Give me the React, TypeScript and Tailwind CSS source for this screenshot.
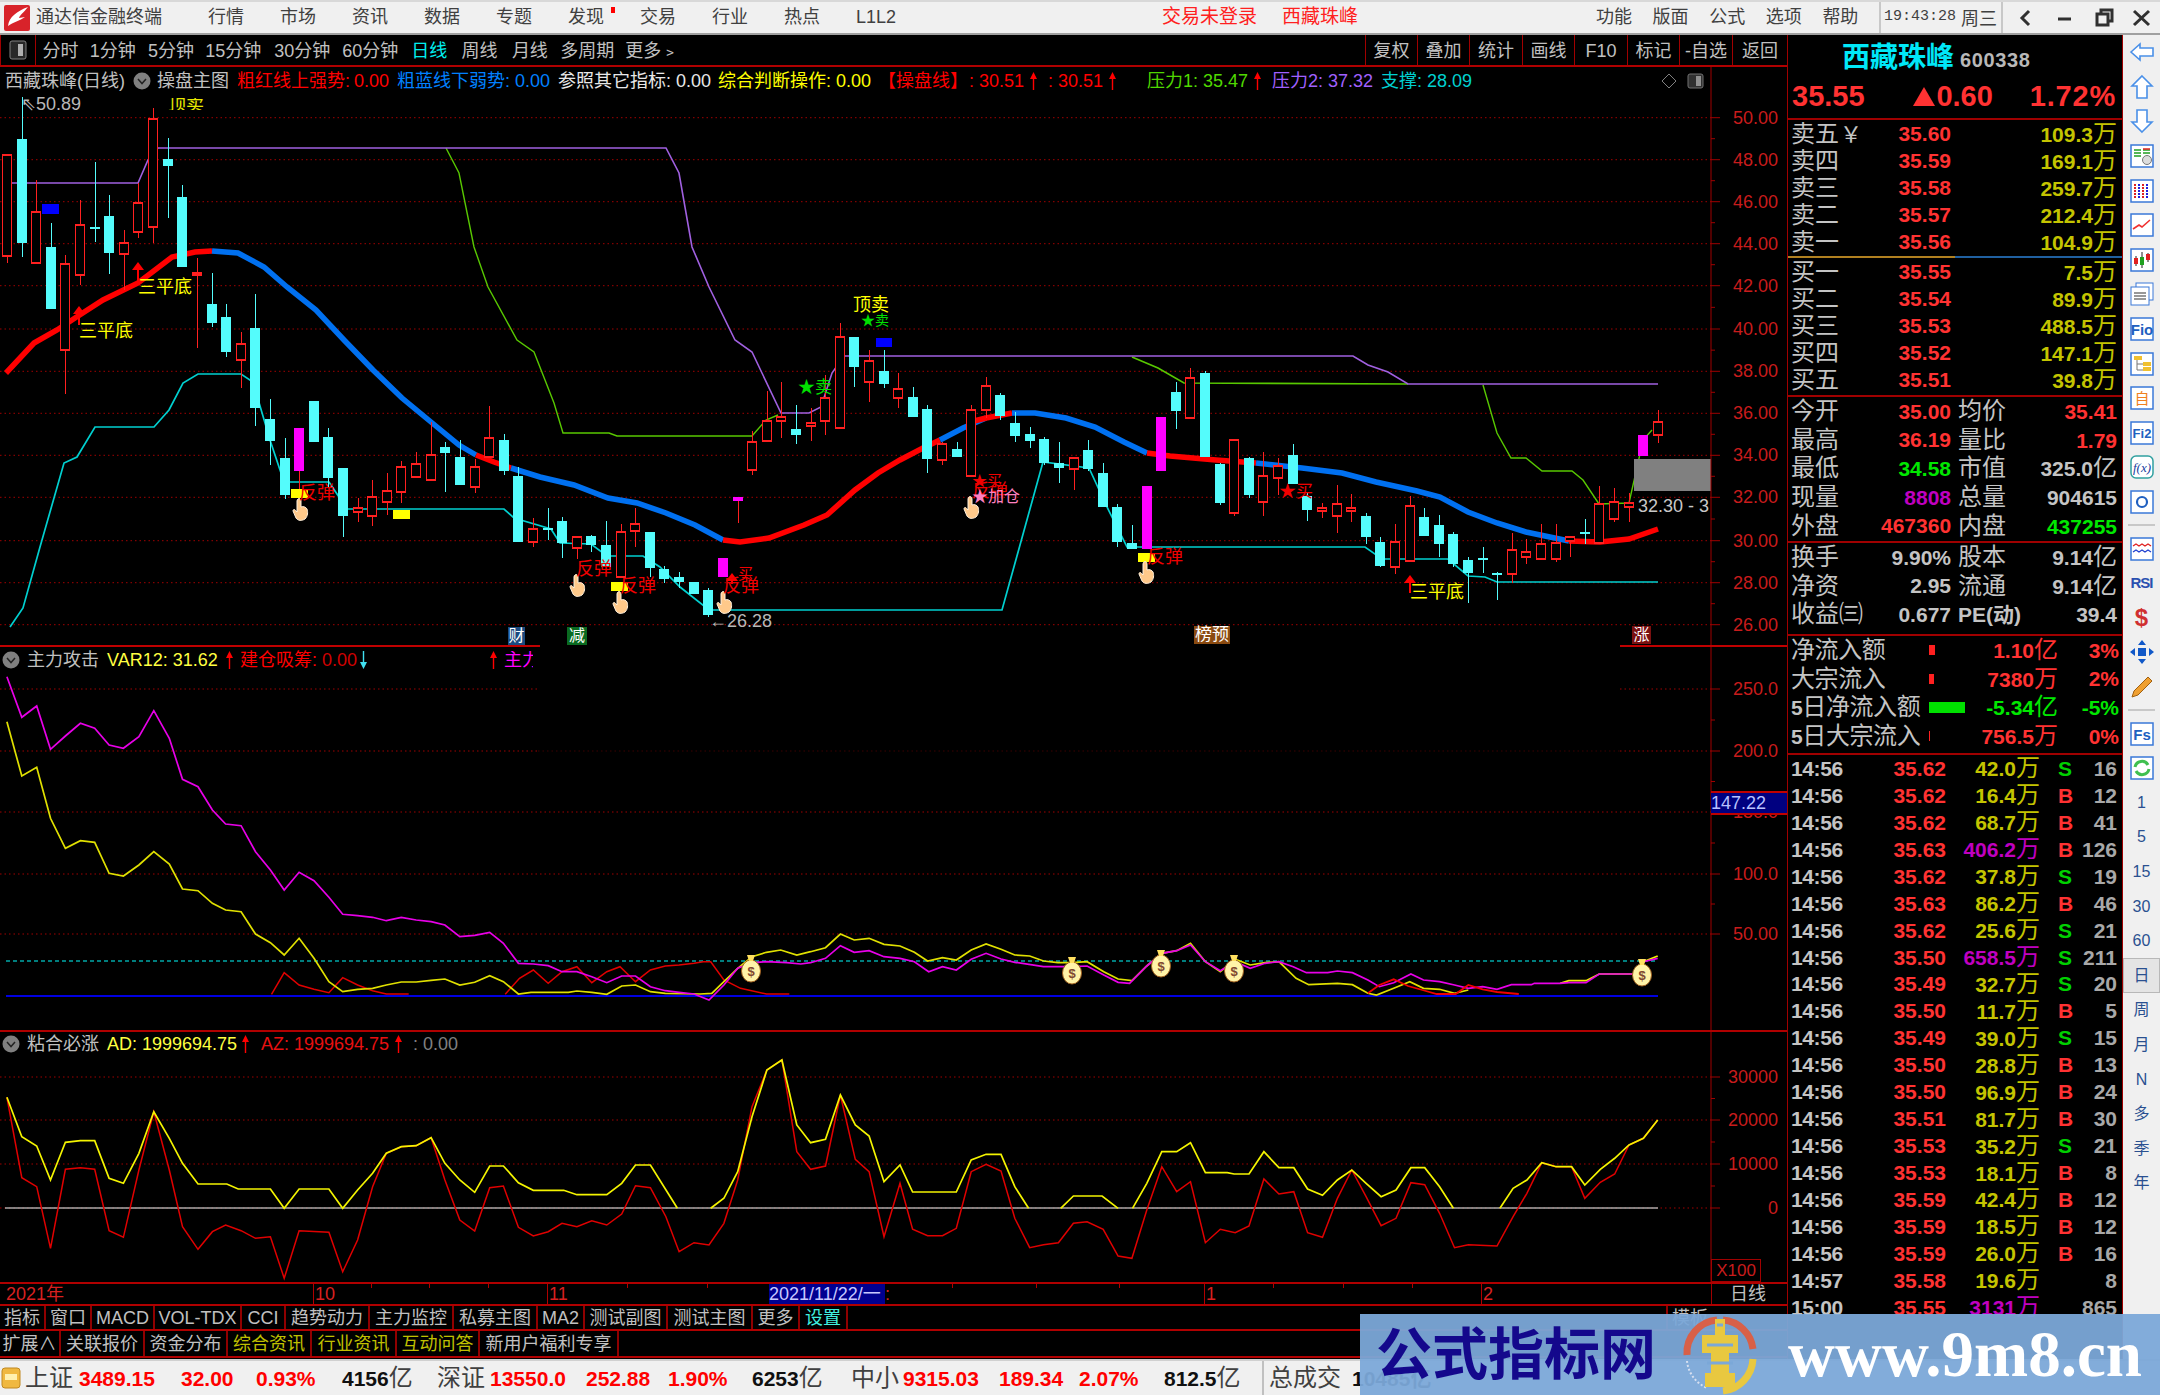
import React from "react";

const cw = 14.61;
// [high, bodyTop, bodyBottom, low, kind]
const candles: [number, number, number, number, string][] = [
  [155,155,256,263,"r"],[97,139,243,257,"c"],[180,212,263,263,"r"],[223,247,309,309,"c"],[255,264,350,394,"r"],
  [200,225,275,285,"r"],[162,227,228,242,"c"],[195,216,253,274,"c"],[230,243,254,290,"r"],[183,203,232,238,"r"],
  [108,119,227,243,"r"],[138,159,166,218,"c"],[185,197,267,267,"c"],[258,273,275,348,"r"],[273,304,323,327,"c"],
  [304,317,352,357,"c"],[332,344,360,388,"r"],[294,328,408,426,"c"],[399,419,441,465,"c"],[438,458,495,499,"c"],
  [428,428,471,490,"m"],[401,401,442,442,"c"],[428,437,478,487,"c"],[468,468,516,537,"c"],[498,508,512,522,"r"],
  [480,497,516,526,"r"],[473,491,502,515,"r"],[461,467,492,503,"r"],[452,464,477,477,"r"],[422,455,480,480,"r"],
  [442,447,453,492,"c"],[440,457,485,485,"c"],[459,467,487,493,"r"],[406,438,457,457,"r"],[434,440,471,475,"c"],
  [467,476,542,542,"c"],[518,529,542,547,"r"],[508,528,530,540,"c"],[517,521,543,558,"c"],[536,537,548,559,"r"],
  [535,536,545,552,"c"],[521,545,567,567,"c"],[524,532,577,577,"r"],[508,524,531,547,"r"],[532,532,568,577,"c"],
  [566,569,579,583,"c"],[572,577,582,588,"c"],[582,582,594,594,"c"],[588,590,615,617,"c"],[558,558,577,577,"m"],
  [497,497,501,523,"m"],[431,442,470,475,"r"],[391,421,441,441,"r"],[382,417,421,438,"r"],[405,429,435,444,"c"],
  [408,423,426,441,"r"],[375,398,421,435,"r"],[323,337,428,428,"r"],[337,337,367,387,"c"],[350,361,382,402,"r"],
  [350,371,384,388,"c"],[373,389,398,408,"r"],[387,397,417,417,"c"],[405,409,459,473,"c"],[442,444,460,465,"r"],
  [442,449,457,457,"c"],[405,410,476,476,"r"],[377,386,410,418,"r"],[393,395,416,420,"c"],[412,423,436,442,"c"],
  [427,434,441,448,"c"],[437,439,463,465,"c"],[442,463,468,483,"c"],[457,458,469,490,"r"],[440,450,469,471,"c"],
  [463,473,507,507,"c"],[504,507,542,547,"c"],[525,543,549,549,"c"],[486,486,549,549,"m"],[417,417,471,471,"m"],
  [382,392,411,429,"c"],[368,378,418,418,"r"],[371,373,457,457,"c"],[463,464,503,505,"c"],[439,440,513,516,"r"],
  [457,458,495,498,"c"],[452,476,502,516,"r"],[458,466,478,495,"r"],[444,455,484,484,"c"],[492,496,510,521,"c"],
  [503,508,511,518,"r"],[485,504,516,533,"r"],[494,508,511,522,"r"],[513,516,537,544,"c"],[537,542,566,567,"c"],
  [524,542,567,574,"r"],[496,506,561,561,"r"],[508,517,536,536,"c"],[515,525,544,557,"c"],[532,534,564,567,"c"],
  [557,560,573,603,"c"],[547,558,559,573,"c"],[572,573,575,600,"c"],[533,550,574,583,"r"],[539,552,557,564,"r"],
  [524,544,559,559,"r"],[524,543,559,562,"r"],[536,537,541,557,"r"],[519,532,534,544,"c"],[486,504,543,543,"r"],
  [488,502,519,522,"r"],[493,503,507,522,"r"],[435,435,456,456,"m"],[410,422,435,443,"r"],
];

const thick = [
  { c: "#ff0000", p: "6,373 34,343 57,330 75,318 103,300 138,283 172,257 195,252 212,251" },
  { c: "#0070f0", p: "212,251 238,253 264,267 287,287 316,310 344,340 373,370 402,398 431,422 459,445 476,455" },
  { c: "#ff0000", p: "476,455 494,462 511,468" },
  { c: "#0070f0", p: "511,468 540,477 574,485 608,498 637,503 666,513 695,525 723,540" },
  { c: "#ff0000", p: "723,540 740,542 769,538 804,525 827,515 855,490 878,473 900,460 923,448 940,440" },
  { c: "#0070f0", p: "940,440 963,428 986,418" },
  { c: "#ff0000", p: "974,421 986,418 1012,413" },
  { c: "#0070f0", p: "1012,413 1035,413 1066,418 1095,427 1124,442 1147,453" },
  { c: "#ff0000", p: "1147,453 1170,456 1216,460 1256,463" },
  { c: "#0070f0", p: "1256,463 1302,468 1342,473 1376,482 1417,491 1440,497 1468,512 1497,523 1526,532 1569,541" },
  { c: "#ff0000", p: "1569,541 1600,542 1629,539 1658,529" },
];
const supportLine = "10,627 23,608 40,547 64,463 77,457 95,427 154,427 169,410 183,383 198,374 241,374 253,382 270,440 284,482 329,482 339,497 344,509 504,509 514,518 551,529 560,543 591,544 607,556 643,556 660,567 680,587 709,610 1002,610 1043,462 1089,468 1107,507 1127,547 1365,547 1382,559 1448,559 1468,576 1485,577 1497,582 1658,582";
const green1 = "446,148 459,173 474,247 488,287 517,340 534,352 554,403 563,433 609,433 617,436 752,436 766,420 778,415";
const green2 = "1132,357 1158,368 1184,383 1408,384";
const green3 = "1483,385 1497,433 1511,458 1526,458 1542,471 1572,471 1583,480 1599,504 1629,503 1638,463 1643,440 1652,430";
const purple = "11,183 138,183 148,160 158,148 666,148 679,173 692,247 709,287 735,340 752,352 781,413 809,413 821,407 832,373 844,356 1353,356 1368,365 1388,372 1408,384 1658,384";

// sampled off the 900px wide crops: x scaled 1.742, y scaled 3
const crop = (left: number[][], right: number[][], top: number) =>
  [...left.map(([x, y]) => [x / 1.742, top + y / 3]), ...right.map(([x, y]) => [900 + x / 1.742, top + y / 3])]
    .map(([x, y]) => `${x.toFixed(1)},${y.toFixed(1)}`)
    .join(" ");

const vMagenta = crop(
  [[12,50],[38,172],[64,138],[88,268],[114,228],[140,190],[165,205],[190,255],[215,265],[242,230],[268,152],[295,235],[318,358],[345,380],[370,450],[393,492],[420,497],[445,575],[471,630],[495,690],[521,637],[547,662],[573,712],[597,763],[623,767],[649,772],[673,782],[699,772],[725,780],[751,785],[775,795],[801,830],[827,826],[853,817],[877,850],[903,910],[929,912],[955,917],[979,935],[1005,935],[1031,950],[1057,968],[1083,948],[1107,948],[1133,980],[1159,992],[1183,997],[1209,1002],[1235,1020],[1261,975],[1285,925],[1310,908],[1335,905],[1370,908],[1395,912],[1412,908],[1438,895],[1464,857],[1488,877],[1514,872],[1540,890]],
  [[0,895],[25,905],[50,935],[74,920],[98,930],[124,898],[150,880],[176,897],[200,907],[250,920],[300,920],[326,918],[355,945],[380,967],[400,970],[430,918],[456,880],[482,872],[506,855],[532,905],[558,932],[584,905],[610,925],[636,910],[660,905],[685,920],[708,938],[745,938],[762,933],[788,938],[815,960],[835,980],[860,968],[890,942],[912,960],[940,965],[966,975],[990,985],[1015,980],[1040,988],[1065,974],[1100,974],[1105,970],[1150,970],[1165,968],[1195,968],[1218,942],[1280,942],[1295,905],[1320,895]],
  660
);
const vYellow = crop(
  [[12,185],[38,348],[64,322],[88,475],[114,565],[140,542],[165,547],[190,640],[215,648],[242,615],[268,575],[295,612],[318,687],[345,692],[370,730],[393,750],[420,755],[445,822],[471,848],[495,885],[521,835],[547,895],[573,965],[597,995],[623,988],[649,985],[673,975],[699,966],[725,966],[751,961],[775,957],[801,975],[827,967],[853,947],[877,965],[903,1002],[925,997],[990,997],[1005,993],[1031,997],[1057,1003],[1083,978],[1107,975],[1133,995],[1159,1000],[1220,1002],[1240,1000],[1261,965],[1285,925],[1310,890],[1335,877],[1360,870],[1388,885],[1412,875],[1438,863],[1464,822],[1488,840],[1514,835],[1540,853]],
  [[0,858],[25,877],[48,903],[74,893],[98,900],[124,870],[150,852],[176,868],[200,885],[226,888],[250,903],[275,908],[300,908],[326,905],[355,935],[380,957],[404,962],[430,918],[456,880],[482,872],[506,850],[532,905],[558,935],[584,898],[610,915],[636,908],[660,905],[690,955],[712,974],[762,970],[788,974],[815,1000],[830,1005],[860,985],[888,965],[912,985],[940,988],[966,1000],[990,990]],
  660
);
const vYellowEnd = crop([], [[1150,970],[1165,962],[1195,962],[1218,942],[1280,942],[1295,905],[1320,888]], 660);
const vRed1 = crop([[473,1003],[495,938],[521,975],[547,988],[573,998],[597,953],[623,975],[649,992],[673,1002],[712,1002]], [], 660);
const vRed2 = crop([[880,1003],[905,955],[929,930],[955,970],[979,935],[1005,920],[1031,968],[1057,935],[1080,920],[1107,965],[1133,930],[1159,918],[1183,915],[1209,910],[1225,905],[1238,905],[1261,960],[1290,985],[1335,1002],[1375,1002]], [], 660);
const vRed3 = crop([], [[815,1000],[835,975],[860,958],[885,978],[910,990],[935,1002],[968,1002],[990,975],[1015,988],[1040,996],[1078,1002]], 660);

const adYellow = [
  crop([[12,262],[38,380],[64,408],[88,510],[114,397],[140,392],[165,392],[190,505],[215,520],[242,430],[268,305],[295,385],[318,460],[345,522],[395,522],[415,537],[471,537],[495,595],[521,537],[573,537],[597,595],[623,540],[649,490],[673,430],[699,410],[725,407],[751,383],[775,460],[801,510],[827,547],[853,468],[877,468],[903,518],[929,541],[982,541],[1005,554],[1057,554],[1083,520],[1107,465],[1133,465],[1180,595]], [], 1010),
  crop([[1238,595],[1261,565],[1285,485],[1310,320],[1336,180],[1362,150],[1388,345],[1412,398],[1438,388],[1464,255],[1490,345],[1514,378],[1540,515]], [[0,465],[22,546],[98,546],[124,450],[150,433],[176,433],[200,530],[224,595]], 1010),
  crop([], [[280,595],[302,558],[352,558],[380,595]], 1010),
  crop([], [[405,595],[430,520],[456,425],[482,425],[506,398],[532,488],[570,488],[582,492],[608,492],[634,425],[660,473],[686,473],[710,537],[736,556],[762,510],[787,480],[812,520],[838,560],[864,540],[890,473],[914,473],[940,530],[964,595]], 1010),
  crop([], [[1045,595],[1068,535],[1092,510],[1118,458],[1143,470],[1170,470],[1193,525],[1220,478],[1245,445],[1270,405],[1295,385],[1320,330]], 1010),
];
const adRed = crop(
  [[12,262],[38,503],[64,530],[88,715],[114,478],[140,473],[165,478],[190,662],[215,682],[242,480],[268,305],[295,480],[318,650],[345,718],[370,665],[393,645],[420,662],[445,685],[471,680],[495,805],[521,662],[573,667],[597,785],[623,690],[649,530],[673,430],[699,410],[725,407],[751,383],[775,510],[801,630],[827,663],[853,533],[877,528],[903,652],[929,678],[955,665],[979,640],[1005,650],[1031,632],[1057,645],[1083,612],[1107,527],[1133,533],[1160,620],[1183,725],[1209,698],[1235,705],[1261,640],[1285,510],[1310,290],[1336,180],[1362,150],[1388,425],[1412,478],[1438,468],[1464,255],[1490,448],[1514,485],[1540,680]],
  [[0,520],[22,658],[48,677],[74,677],[98,655],[124,485],[150,463],[176,483],[200,625],[226,713],[250,704],[276,698],[302,640],[326,635],[354,658],[380,738],[404,745],[430,600],[456,470],[482,545],[506,515],[532,698],[558,658],[584,668],[608,648],[634,507],[660,552],[686,545],[710,668],[736,682],[762,565],[787,480],[812,560],[838,647],[864,625],[890,518],[914,524],[940,610],[966,713],[990,704],[1040,708],[1068,620],[1092,550],[1118,458],[1143,470],[1170,470],[1193,565],[1220,517],[1245,492],[1270,405],[1295,385],[1320,330]],
  1010
);

const priceGrid = [117.7, 159.7, 201.7, 243.7, 285.7, 329, 371.3, 413.3, 455.3, 497.3, 540.7, 582.7, 624.7];
const priceText = ["50.00","48.00","46.00","44.00","42.00","40.00","38.00","36.00","34.00","32.00","30.00","28.00","26.00"];

// chart overlays: [x, y, text, colour class, size class]
const priceLabels: [number, number, string, string, string][] = [
  [138,278,"三平底","text-[#ffff00]","text-[18px]"],
  [79,322,"三平底","text-[#ffff00]","text-[18px]"],
  [1410,583,"三平底","text-[#ffff00]","text-[18px]"],
  [853,296,"顶卖","text-[#ffff00]","text-[18px]"],
  [861,311,"★卖","text-[#00e000]","text-[14px]"],
  [798,379,"★卖","text-[#00e000]","text-[17px]"],
  [299,484,"反弹","text-[#f00000]","text-[18px]"],
  [576,560,"反弹","text-[#f00000]","text-[18px]"],
  [620,577,"反弹","text-[#f00000]","text-[18px]"],
  [723,577,"反弹","text-[#f00000]","text-[18px]"],
  [1147,548,"反弹","text-[#f00000]","text-[18px]"],
  [972,482,"反弹","text-[#f00000]","text-[18px]"],
  [972,472,"★买","text-[#f00000]","text-[15px]"],
  [972,488,"★加仓","text-[#ff80c0]","text-[16px]"],
  [738,565,"买","text-[#f00000]","text-[15px]"],
  [1279,483,"★买","text-[#f00000]","text-[17px]"],
  [21,95,"⇖50.89","text-[#b8b8b8]","text-[18px]"],
  [709,612,"←26.28","text-[#b8b8b8]","text-[18px]"],
];
const hands = [[292,498],[569,574],[612,591],[716,591],[963,496],[1138,561]];
const yellowMarks = [[291,489],[393,510],[611,582],[1138,553]];
const bags = [[751,968],[1072,970],[1161,963],[1234,968],[1642,972]];
const arrows = [[138,262,280],[79,306,325],[1410,575,593],[732,573,584]];

const Hand = ({ x, y }: { x: number; y: number }) => (
  <path
    transform={`translate(${x} ${y})`}
    d="M6 1C7.5 0 9 1 9 3L9 9C11 8 14 9 15 11C16 14 16 18 13 21C10 23 6 23 4 20L1 13C1 11 3 11 4 13L5 14L5 3C5 2 5.5 1.3 6 1Z"
    fill="#ffc98a"
    stroke="#fff0dc"
    strokeWidth="1"
  />
);

const Bag = ({ x, y }: { x: number; y: number }) => (
  <g transform={`translate(${x} ${y})`}>
    <ellipse cx="0" cy="3" rx="9.5" ry="11" fill="#fff3a8" stroke="#a06020" strokeWidth="1" />
    <path d="M-4 -13H4L2 -7H-2Z" fill="#ffe060" />
    <text x="0" y="8" textAnchor="middle" fontSize="13" fontWeight="700" fill="#804830" fontFamily="Liberation Sans">$</text>
  </g>
);

const Up = ({ c = "#ff0000" }: { c?: string }) => (
  <svg width="9" height="18" viewBox="0 0 9 18" className="inline-block align-[-3px]">
    <path d="M4.5 0L8 7H5.2V18H3.8V7H1Z" fill={c} />
  </svg>
);

const Dropdown = () => (
  <svg width="18" height="18" viewBox="0 0 18 18">
    <circle cx="9" cy="9" r="8.5" fill="#808080" />
    <path d="M5 7L9 11.5L13 7" fill="none" stroke="#222" strokeWidth="1.5" />
  </svg>
);

const legend: [React.ReactNode, string, string][] = [
  ["操盘主图", "text-[#c0c0c0]", "w-[80px]"],
  ["粗红线上强势:", "text-[#ff0000]", "w-[117px]"],
  ["0.00", "text-[#ff0000]", "w-[43px]"],
  ["粗蓝线下弱势:", "text-[#0080ff]", "w-[118px]"],
  ["0.00", "text-[#0080ff]", "w-[43px]"],
  ["参照其它指标:", "text-[#e8e8e8]", "w-[118px]"],
  ["0.00", "text-[#e8e8e8]", "w-[42px]"],
  ["综合判断操作:", "text-[#ffff00]", "w-[118px]"],
  ["0.00", "text-[#ffff00]", "w-[42px]"],
  ["【操盘线】", "text-[#ff0000]", "w-[91px]"],
  [<>: 30.51 <Up /></>, "text-[#ff0000]", "w-[79px]"],
  [<>: 30.51 <Up /></>, "text-[#ff0000]", "w-[99px]"],
  [<>压力1: 35.47 <Up /></>, "text-[#50d800]", "w-[125px]"],
  ["压力2: 37.32", "text-[#a060ff]", "w-[109px]"],
  ["支撑: 28.09", "text-[#00d0d0]", "w-[100px]"],
];

const topMenu = ["行情", "市场", "资讯", "数据", "专题", "发现", "交易", "行业", "热点", "L1L2"];
const periodTabs: [string, string][] = [
  ["分时", "w-[48px]"], ["1分钟", "w-[59px]"], ["5分钟", "w-[58px]"], ["15分钟", "w-[70px]"], ["30分钟", "w-[69px]"],
  ["60分钟", "w-[70px]"], ["日线", "w-[51px] text-[#00f0f0]"], ["周线", "w-[51px]"], ["月线", "w-[49px]"], ["多周期", "w-[66px]"], ["更多﹥", "w-[60px]"],
];
const toolTabs: [string, string][] = [
  ["复权", "w-[52px]"], ["叠加", "w-[52px]"], ["统计", "w-[53px]"], ["画线", "w-[52px]"], ["F10", "w-[53px]"], ["标记", "w-[52px]"], ["-自选", "w-[53px]"], ["返回", "w-[55px]"],
];
const bottomTabs1: [string, string][] = [
  ["指标", "w-[46px]"], ["窗口", "w-[46px]"], ["MACD", "w-[63px]"], ["VOL-TDX", "w-[87px]"], ["CCI", "w-[44px]"], ["趋势动力", "w-[84px]"], ["主力监控", "w-[84px]"],
  ["私募主图", "w-[84px]"], ["MA2", "w-[47px]"], ["测试副图", "w-[83px]"], ["测试主图", "w-[85px]"], ["更多", "w-[47px]"], ["设置", "w-[48px] text-[#40f0e0]"],
];
const bottomTabs2: [string, string][] = [
  ["扩展∧", "w-[61px]"], ["关联报价", "w-[84px]"], ["资金分布", "w-[83px]"], ["综合资讯", "w-[84px] text-[#c0c000]"], ["行业资讯", "w-[85px] text-[#c0c000]"],
  ["互动问答", "w-[83px] text-[#c0c000]"], ["新用户福利专享", "w-[139px]"],
];

const Unit = ({ v, u, c }: { v: string; u: string; c: string }) => (
  <span className={`font-bold text-[21px] ${c}`}>
    {v}
    <span className="font-normal text-[24px]">{u}</span>
  </span>
);

const asks = [["卖五","35.60","109.3"],["卖四","35.59","169.1"],["卖三","35.58","259.7"],["卖二","35.57","212.4"],["卖一","35.56","104.9"]];
const bids = [["买一","35.55","7.5"],["买二","35.54","89.9"],["买三","35.53","488.5"],["买四","35.52","147.1"],["买五","35.51","39.8"]];
const R = "text-[#ff3232]", G = "text-[#00e800]", W = "text-[#c4c4c4]", M = "text-[#c000c0]";
const stats: [string, string, string, string, string, string, string?][] = [
  ["今开","35.00",R,"均价","35.41",R],
  ["最高","36.19",R,"量比","1.79",R],
  ["最低","34.58",G,"市值","325.0",W,"亿"],
  ["现量","8808",M,"总量","904615",W],
  ["外盘","467360",R,"内盘","437255",G],
];
const funds: [string, string, string, string?][] = [
  ["换手","9.90%","股本","9.14"],
  ["净资","2.95","流通","9.14"],
  ["收益㈢","0.677","PE(动)"],
];
const flows: [string, string, string, string, string, string][] = [
  ["净流入额","w-[6px] h-[10px] bg-[#ff2020]","1.10","亿","3%",R],
  ["大宗流入","w-[5px] h-[10px] bg-[#ff2020]","7380","万","2%",R],
  ["5日净流入额","w-[36px] h-[11px] bg-[#00e000]","-5.34","亿","-5%",G],
  ["5日大宗流入","w-[1px] h-[10px] bg-[#ff2020]","756.5","万","0%",R],
];
const trades: [string, string, string, string, string, string][] = [
  ["14:56","35.62","42.0万","","S","16"],["14:56","35.62","16.4万","","B","12"],["14:56","35.62","68.7万","","B","41"],
  ["14:56","35.63","406.2万","m","B","126"],["14:56","35.62","37.8万","","S","19"],["14:56","35.63","86.2万","","B","46"],
  ["14:56","35.62","25.6万","","S","21"],["14:56","35.50","658.5万","m","S","211"],["14:56","35.49","32.7万","","S","20"],
  ["14:56","35.50","11.7万","","B","5"],["14:56","35.49","39.0万","","S","15"],["14:56","35.50","28.8万","","B","13"],
  ["14:56","35.50","96.9万","","B","24"],["14:56","35.51","81.7万","","B","30"],["14:56","35.53","35.2万","","S","21"],
  ["14:56","35.53","18.1万","","B","8"],["14:56","35.59","42.4万","","B","12"],["14:56","35.59","18.5万","","B","12"],
  ["14:56","35.59","26.0万","","B","16"],["14:57","35.58","19.6万","","","8"],["15:00","35.55","3131万","m","","865"],
];

const Tile = ({ children }: { children: React.ReactNode }) => (
  <svg width="24" height="24" viewBox="0 0 24 24">
    <rect x="1" y="1" width="22" height="22" fill="#fff" stroke="#3a78d8" strokeWidth="1.5" />
    {children}
  </svg>
);
const small = { fontFamily: "Liberation Sans", fontWeight: 700 };
const Arrow = ({ d }: { d: string }) => (
  <svg width="26" height="26" viewBox="0 0 26 26">
    <path d={d} fill="#fff" stroke="#4a90e8" strokeWidth="1.6" />
  </svg>
);
const sideIcons: React.ReactNode[] = [
  <Arrow d="M2 13L11 5V9H24V17H11V21Z" />,
  <Arrow d="M13 2L23 12H18V24H8V12H3Z" />,
  <Arrow d="M13 24L23 14H18V2H8V14H3Z" />,
  <Tile><path d="M4 6H11M4 9H11M4 12H11M13 6H20M13 9H20" stroke="#20a020" strokeWidth="1.5" /><path d="M13 5H20" stroke="#e02020" strokeWidth="1.5" /><circle cx="17" cy="16" r="4.5" fill="#ddd" stroke="#777" /></Tile>,
  <Tile><path d="M5 5V19M9 5V19M13 5V19M17 5V19" stroke="#e02020" strokeWidth="2" strokeDasharray="2 1" /><path d="M9 5V19" stroke="#2020e0" strokeWidth="2" strokeDasharray="2 1" /><path d="M17 5V19" stroke="#2020e0" strokeWidth="2" strokeDasharray="2 1" /></Tile>,
  <Tile><path d="M3 16L9 12L12 14L20 7" fill="none" stroke="#f03030" strokeWidth="1.6" /></Tile>,
  <Tile><path d="M6 8V18M12 4V20M18 5V14" stroke="#202020" /><rect x="4" y="10" width="4" height="6" fill="#e02020" /><rect x="10" y="9" width="4" height="8" fill="#20a020" /><rect x="16" y="6" width="4" height="6" fill="#e02020" /></Tile>,
  <svg width="26" height="24" viewBox="0 0 26 24"><rect x="7" y="1" width="17" height="17" fill="#fff" stroke="#3a78d8" /><rect x="2" y="5" width="18" height="18" fill="#fff" stroke="#3a78d8" /><path d="M5 11H17M5 14H17M5 17H17" stroke="#777" strokeWidth="1.5" /></svg>,
  <Tile><text x="12" y="18" textAnchor="middle" fontSize="15" fill="#2060c0" style={small}>Fio</text></Tile>,
  <Tile><path d="M7 7V18H13M7 12H13" stroke="#777" fill="none" /><rect x="4" y="4" width="8" height="4" fill="#f0c030" /><rect x="13" y="10" width="8" height="4" fill="#f0c030" /><rect x="13" y="15" width="8" height="4" fill="#f0c030" /></Tile>,
  <Tile><text x="12" y="18" textAnchor="middle" fontSize="15" fill="#f08020" fontFamily="Noto Sans CJK SC">自</text></Tile>,
  <Tile><text x="12" y="17" textAnchor="middle" fontSize="13" fill="#2060c0" style={small}>Fi2</text></Tile>,
  <svg width="26" height="24" viewBox="0 0 26 24"><rect x="2" y="1" width="22" height="22" rx="5" fill="#fff" stroke="#30a0a0" strokeWidth="1.5" /><text x="13" y="17" textAnchor="middle" fontSize="13" fill="#2040a0" fontFamily="Liberation Serif" fontStyle="italic">f(x)</text></svg>,
  <Tile><circle cx="12" cy="12" r="5" fill="#fff" stroke="#2060c0" strokeWidth="2.2" /></Tile>,
  "sep",
  <Tile><path d="M3 9L6 7L9 9L12 7L15 9L18 7L21 9" fill="none" stroke="#e02020" strokeWidth="1.3" /><path d="M3 15L6 13L9 15L12 13L15 15L18 13L21 15" fill="none" stroke="#2040d0" strokeWidth="1.3" /></Tile>,
  <span className="font-bold text-[15px] text-[#2a50b0] tracking-[-1px]">RSI</span>,
  <span className="font-bold text-[24px] leading-none text-[#d03030]">$</span>,
  <svg width="24" height="24" viewBox="0 0 24 24" fill="#1058c8"><path d="M12 0L16 5H8ZM12 24L8 19H16ZM0 12L5 8V16ZM24 12L19 16V8Z" /><rect x="8" y="8" width="8" height="8" /></svg>,
  <svg width="24" height="24" viewBox="0 0 24 24"><path d="M18 2L22 6L8 20L2 22L4 16Z" fill="#f0a030" stroke="#a06010" /></svg>,
  "sep",
  <Tile><text x="12" y="18" textAnchor="middle" fontSize="15" fill="#2060c0" style={small}>Fs</text></Tile>,
  <Tile><path d="M5 11A7 7 0 0 1 18 9M19 13A7 7 0 0 1 6 15" fill="none" stroke="#40c050" strokeWidth="3" /></Tile>,
];
const sideNums = ["1", "5", "15", "30", "60", "日", "周", "月", "N", "多", "季", "年"];

const Pos = ({ x, y, w, h, className, children }: { x: number; y: number; w?: number; h?: number; className?: string; children: React.ReactNode }) => (
  <div className={`absolute whitespace-nowrap ${className ?? ""}`} style={{ left: x, top: y, width: w, height: h }}>
    {children}
  </div>
);

const Grid = ({ y, x1 = 0, x2 = 1711 }: { y: number; x1?: number; x2?: number }) => (
  <line x1={x1} x2={x2} y1={y} y2={y} stroke="#a00000" strokeWidth="1" strokeDasharray="1.5 3" />
);
const Ticks = ({ ys }: { ys: number[] }) => (
  <>
    {ys.map((y, i) => (
      <g key={y}>
        <line x1="1711" x2="1720" y1={y} y2={y} stroke="#a00000" />
        {i < ys.length - 1 && <line x1="1711" x2="1715" y1={(y + ys[i + 1]) / 2} y2={(y + ys[i + 1]) / 2} stroke="#a00000" />}
      </g>
    ))}
  </>
);

const PricePane = () => (
  <div className="relative h-[580px] overflow-hidden">
    <svg className="absolute inset-0" width="1787" height="580" viewBox="0 67 1787 580">
      {priceGrid.map((y) => <Grid key={y} y={y} />)}
      <Ticks ys={priceGrid} />
      <polyline points={supportLine} fill="none" stroke="#00d0d0" strokeWidth="1.7" />
      <polyline points={green1} fill="none" stroke="#58c800" strokeWidth="1.4" />
      <polyline points={green2} fill="none" stroke="#58c800" strokeWidth="1.6" />
      <polyline points={green3} fill="none" stroke="#58c800" strokeWidth="1.4" />
      <polyline points={purple} fill="none" stroke="#a060e0" strokeWidth="1.6" />
      {thick.map((s) => <polyline key={s.p} points={s.p} fill="none" stroke={s.c} strokeWidth="5.5" />)}
      {candles.map(([hi, top, bot, lo, kind], i) => {
        const x = Math.round(7 + cw * i);
        const col = kind === "c" ? "#54fcfc" : kind === "m" ? "#ff00ff" : "#ff2020";
        return (
          <g key={i} shapeRendering="crispEdges">
            <line x1={x} x2={x} y1={hi} y2={lo} stroke={kind === "m" ? "#ff2020" : col} strokeWidth="1" />
            {kind === "r" ? (
              <rect x={x - 4.5} y={top} width="9" height={bot - top} fill="#000" stroke={col} strokeWidth="1.2" />
            ) : (
              <rect x={x - 5} y={top} width="10" height={Math.max(bot - top, 2)} fill={col} />
            )}
          </g>
        );
      })}
      <rect x="42" y="204" width="17" height="10" fill="#0000ff" />
      <rect x="876" y="338" width="16" height="9" fill="#0000ff" />
      {yellowMarks.map(([x, y]) => <rect key={x} x={x} y={y} width="17" height="9" fill="#ffff00" />)}
      {hands.map(([x, y]) => <Hand key={x} x={x} y={y} />)}
      {arrows.map(([x, y1, y2]) => <path key={x} d={`M${x} ${y1}L${x + 6} ${y1 + 8}H${x + 1}V${y2}H${x - 1}V${y1 + 8}H${x - 6}Z`} fill="#ff0000" />)}
      <rect x="1634" y="459" width="77" height="32" fill="#808080" />
      <line x1="1711" x2="1711" y1="67" y2="647" stroke="#a00000" />
      <line x1="0" x2="540" y1="646" y2="646" stroke="#c00000" strokeWidth="2" />
      <line x1="1620" x2="1787" y1="646" y2="646" stroke="#c00000" strokeWidth="2" />
    </svg>

    <div className="relative flex h-[28px] items-center text-[18px] leading-none">
      <span className="ml-[5px] w-[128px] text-[#c0c0c0]">西藏珠峰(日线)</span>
      <span className="w-[24px]"><Dropdown /></span>
      {legend.map(([t, c, w], i) => (
        <span key={i} className={`whitespace-nowrap ${c} ${w}`}>{t}</span>
      ))}
      <svg className="absolute left-[1660px] top-[5px]" width="18" height="18" viewBox="0 0 18 18"><path d="M9 2L16 9L9 16L2 9Z" fill="none" stroke="#808080" /></svg>
      <svg className="absolute left-[1687px] top-[5px]" width="18" height="18" viewBox="0 0 18 18"><rect x="1" y="2" width="15" height="14" rx="2" fill="#303030" stroke="#707070" /><rect x="9" y="4" width="5" height="10" fill="#909090" /></svg>
    </div>

    {priceLabels.map(([x, y, t, c, s], i) => (
      <Pos key={i} x={x} y={y - 67} className={`leading-[18px] ${c} ${s}`}>{t}</Pos>
    ))}
    <Pos x={168} y={31} h={12} className="overflow-hidden text-[18px] leading-[12px] text-[#e8e800]">顶卖</Pos>
    <Pos x={1638} y={429} w={71} className="overflow-hidden text-[18px] leading-[20px] text-[#c8c8c8]">32.30 - 35.47</Pos>
    {priceText.map((t, i) => (
      <Pos key={t} x={1722} y={priceGrid[i] - 67 - 11} w={56} className="text-right text-[18px] leading-[22px] text-[#c81c1c]">{t}</Pos>
    ))}
    <Pos x={508} y={560} w={17} h={18} className="bg-[#1a4a80] text-center text-[16px] leading-[18px] text-white">财</Pos>
    <Pos x={567} y={560} w={20} h={18} className="bg-[#0a6a20] text-center text-[16px] leading-[18px] text-white">减</Pos>
    <Pos x={1194} y={559} w={36} h={18} className="bg-[#8a4a10] text-center text-[17px] leading-[18px] text-white">榜预</Pos>
    <Pos x={1632} y={559} w={19} h={18} className="bg-[#7a1010] text-center text-[16px] leading-[18px] text-white">涨</Pos>
  </div>
);

const VarPane = () => {
  const ys = [689, 751, 812, 874, 934];
  return (
    <div className="relative h-[383px] overflow-hidden">
      <svg className="absolute inset-0" width="1787" height="383" viewBox="0 647 1787 383">
        <Grid y={689} x2={538} />
        <Grid y={689} x1={1620} />
        <Grid y={751} x2={538} />
        <Grid y={751} x1={1620} />
        <line x1="538" x2="1620" y1="751" y2="751" stroke="#3c0000" strokeDasharray="1.5 3" />
        <Grid y={812} />
        <Grid y={874} />
        <Grid y={934} />
        <Ticks ys={ys} />
        <line x1="6" x2="1658" y1="961" y2="961" stroke="#00a8a8" strokeWidth="1.6" strokeDasharray="4 3" />
        <line x1="6" x2="1658" y1="996" y2="996" stroke="#0000e0" strokeWidth="2" />
        <polyline points={vRed1} fill="none" stroke="#e00000" strokeWidth="1.5" />
        <polyline points={vRed2} fill="none" stroke="#e00000" strokeWidth="1.5" />
        <polyline points={vYellow} fill="none" stroke="#e0e000" strokeWidth="1.7" />
        <polyline points={vYellowEnd} fill="none" stroke="#f0f000" strokeWidth="1.7" />
        <polyline points={vMagenta} fill="none" stroke="#e800e8" strokeWidth="1.7" />
        <polyline points={vRed3} fill="none" stroke="#f00000" strokeWidth="1.8" />
        {bags.map(([x, y]) => <Bag key={x} x={x} y={y} />)}
        <line x1="1711" x2="1711" y1="647" y2="1030" stroke="#a00000" />
      </svg>
      <div className="relative flex h-[26px] items-center whitespace-nowrap text-[18px] leading-none">
        <span className="ml-[2px] w-[25px]"><Dropdown /></span>
        <span className="w-[80px] text-[#c0c0c0]">主力攻击</span>
        <span className="w-[118px] text-[#ffff40]">VAR12: 31.62</span>
        <span className="w-[15px]"><Up /></span>
        <span className="w-[119px] text-[#ff0000]">建仓吸筹: <span className="text-[#d00000]">0.00</span></span>
        <span className="w-[130px]"><svg width="9" height="18" viewBox="0 0 9 18" className="inline-block rotate-180 align-[-3px]"><path d="M4.5 0L8 7H5.2V18H3.8V7H1Z" fill="#40e0f0" /></svg></span>
        <span className="w-[15px]"><Up /></span>
        <span className="w-[29px] overflow-hidden text-[#ff00ff]">主力</span>
      </div>
      {["250.0", "200.0", "150.0", "100.0", "50.00"].map((t, i) => (
        <Pos key={t} x={1722} y={ys[i] - 647 - 11} w={56} className="text-right text-[18px] leading-[22px] text-[#c81c1c]">{t}</Pos>
      ))}
      <Pos x={1711} y={144} w={76} h={24} className="border-y-2 border-[#c00000] bg-[#000080] text-[18px] leading-[20px] text-[#b8c0ff]">147.22</Pos>
    </div>
  );
};

const AdPane = () => {
  const ys = [1077, 1120, 1164, 1208];
  return (
    <div className="relative h-[252px] overflow-hidden border-t-2 border-[#b00000]">
      <svg className="absolute left-0 top-[-2px]" width="1787" height="252" viewBox="0 1030 1787 252">
        {ys.map((y) => <Grid key={y} y={y} />)}
        <Ticks ys={ys} />
        <line x1="5" x2="1658" y1="1208" y2="1208" stroke="#a8a8a8" strokeWidth="1.6" />
        <polyline points={adRed} fill="none" stroke="#e00000" strokeWidth="1.5" />
        {adYellow.map((p) => <polyline key={p} points={p} fill="none" stroke="#f4f400" strokeWidth="1.7" />)}
        <line x1="1711" x2="1711" y1="1030" y2="1282" stroke="#a00000" />
      </svg>
      <div className="relative flex h-[24px] items-center text-[18px] leading-none">
        <span className="ml-[2px] w-[25px]"><Dropdown /></span>
        <span className="w-[80px] text-[#c0c0c0]">粘合必涨</span>
        <span className="w-[134px] text-[#ffff40]">AD: 1999694.75</span>
        <span className="w-[20px]"><Up /></span>
        <span className="w-[133px] text-[#e81010]">AZ: 1999694.75</span>
        <span className="w-[19px]"><Up /></span>
        <span className="text-[#808080]">: 0.00</span>
      </div>
      {["30000", "20000", "10000", "0"].map((t, i) => (
        <Pos key={t} x={1722} y={ys[i] - 1032 - 11} w={56} className="text-right text-[18px] leading-[22px] text-[#c81c1c]">{t}</Pos>
      ))}
      <Pos x={1711} y={227} w={50} h={23} className="border border-[#a00000] text-center text-[17px] leading-[22px] text-[#c81c1c]">X100</Pos>
    </div>
  );
};

const DateAxis = () => {
  const minor = [371, 429, 488, 627, 707, 952, 1036, 1119, 1273, 1343, 1412];
  return (
    <div className="relative h-[24px] border-y-2 border-[#b00000] text-[18px] leading-[20px] text-[#d82020]">
      <div className="flex h-full">
        <span className="ml-[6px] w-[307px]">2021年</span>
        <span className="w-[234px] border-l border-[#b00000] pl-[1px]">10</span>
        <span className="w-[222px] border-l border-[#b00000] pl-[1px]">11</span>
        <span className="w-[116px] bg-[#000090] text-[#c8c8ff]">2021/11/22/一</span>
        <span className="w-[319px]">:</span>
        <span className="w-[277px] border-l border-[#b00000] pl-[1px]">1</span>
        <span className="w-[230px] border-l border-[#b00000] pl-[1px]">2</span>
        <span className="w-[76px] border-l border-[#a00000] pl-[18px] text-[#c0c0c0]">日线</span>
      </div>
      {minor.map((x) => <span key={x} className="absolute top-0 h-[4px] w-px bg-[#b00000]" style={{ left: x }} />)}
    </div>
  );
};

const TabRow = ({ tabs, height, extra }: { tabs: [string, string][]; height: string; extra?: React.ReactNode }) => (
  <div className={`flex border-b-2 border-[#b00000] text-[18px] text-[#c0c0c0] ${height}`}>
    {tabs.map(([t, c]) => (
      <span key={t} className={`flex items-center justify-center whitespace-nowrap border-r-2 border-[#900000] pt-[2px] ${c}`}>{t}</span>
    ))}
    {extra}
  </div>
);

const SidePanel = () => (
  <div className="h-full w-[336px] shrink-0 overflow-hidden border-x border-[#a00000] bg-black pl-[3px] pr-[5px]">
    <div className="flex h-[83px] flex-col">
      <div className="flex h-[41px] items-center pl-[51px] pt-[4px]">
        <span className="text-[28px] font-bold leading-none text-[#00e8f8]">西藏珠峰</span>
        <span className="ml-[6px] mt-[5px] text-[20px] font-bold tracking-[0.6px] text-[#b8b8b8]">600338</span>
      </div>
      <div className="flex h-[40px] items-center justify-between pr-[1px] text-[29px] font-bold leading-none text-[#ff3232]">
        <span className="ml-[1px]">35.55</span>
        <span className="ml-[12px] flex items-center">
          <svg width="22" height="19" viewBox="0 0 22 19" className="mr-[1px]"><path d="M11 0L22 19H0Z" fill="#ff3232" /></svg>0.60
        </span>
        <span className="tracking-[0.8px]">1.72%</span>
      </div>
    </div>
    <div className="-ml-[3px] -mr-[5px] border-t-2 border-[#a00000] pl-[3px] pr-[5px]">
      <div className="h-[136px]">
        {asks.map(([l, p, v], i) => (
          <div key={l} className="grid h-[27px] grid-cols-[100px_60px_1fr] items-center whitespace-nowrap leading-none">
            <span className={`text-[24px] ${W}`}>{l}{i === 0 && <span className="ml-[1px] text-[22px]">￥</span>}</span>
            <span className={`text-right text-[21px] font-bold ${R}`}>{p}</span>
            <span className="text-right"><Unit v={v} u="万" c="text-[#c4c400]" /></span>
          </div>
        ))}
      </div>
    </div>
    <div className="-ml-[3px] -mr-[5px] h-[2px] bg-[linear-gradient(90deg,#b08020_50%,#2060a0_50%)]" />
    <div className="h-[137px]">
      {bids.map(([l, p, v]) => (
        <div key={l} className="grid h-[27px] grid-cols-[100px_60px_1fr] items-center whitespace-nowrap leading-none">
          <span className={`text-[24px] ${W}`}>{l}</span>
          <span className={`text-right text-[21px] font-bold ${R}`}>{p}</span>
          <span className="text-right"><Unit v={v} u="万" c="text-[#c4c400]" /></span>
        </div>
      ))}
    </div>
    <div className="-ml-[3px] -mr-[5px] h-[146px] border-t-2 border-[#a00000] pl-[3px] pr-[5px]">
      {stats.map(([a, av, ac, b, bv, bc, u]) => (
        <div key={a} className="grid h-[28.6px] grid-cols-[90px_70px_60px_1fr] items-center whitespace-nowrap leading-none">
          <span className={`text-[24px] ${W}`}>{a}</span>
          <span className={`text-right text-[21px] font-bold ${ac}`}>{av}</span>
          <span className={`pl-[7px] text-[24px] ${W}`}>{b}</span>
          <span className="text-right"><Unit v={bv} u={u ?? ""} c={bc} /></span>
        </div>
      ))}
    </div>
    <div className="-ml-[3px] -mr-[5px] h-[93px] border-t-2 border-[#a00000] pl-[3px] pr-[5px]">
      {funds.map(([a, av, b, bv]) => (
        <div key={a} className="grid h-[28.6px] grid-cols-[90px_70px_60px_1fr] items-center whitespace-nowrap leading-none">
          <span className={`text-[24px] ${W}`}>{a}</span>
          <span className={`text-right text-[21px] font-bold ${W}`}>{av}</span>
          {b.startsWith("PE") ? (
            <span className={`pl-[7px] text-[21px] font-bold ${W}`}>{b}</span>
          ) : (
            <span className={`pl-[7px] text-[24px] ${W}`}>{b}</span>
          )}
          <span className="text-right">
            {bv ? <Unit v={bv} u="亿" c={W} /> : <span className={`text-[21px] font-bold ${W}`}>39.4</span>}
          </span>
        </div>
      ))}
    </div>
    <div className="-ml-[3px] -mr-[5px] h-[119px] border-t-2 border-[#a00000] pl-[3px] pr-[3px]">
      {flows.map(([l, bar, v, u, pct, c]) => (
        <div key={l} className="grid h-[28.6px] grid-cols-[138px_40px_89px_1fr] items-center whitespace-nowrap leading-none">
          <span className={`${W} text-[24px] tracking-[-0.4px]`}>
            {l.startsWith("5") ? <><b className="text-[21px]">5</b>{l.slice(1)}</> : l}
          </span>
          <span><span className={`block ${bar}`} /></span>
          <span className="text-right"><Unit v={v} u={u} c={c} /></span>
          <span className={`text-right text-[21px] font-bold ${c}`}>{pct}</span>
        </div>
      ))}
    </div>
    <div className="-ml-[3px] -mr-[5px] border-t-2 border-[#a00000] pl-[3px] pr-[5px]">
      {trades.map(([t, p, v, k, side, n], i) => (
        <div key={i} className="grid h-[26.94px] grid-cols-[70px_85px_94px_40px_1fr] items-center whitespace-nowrap text-[21px] font-bold leading-none">
          <span className={`tracking-[-0.4px] ${W}`}>{t}</span>
          <span className={`text-right ${R}`}>{p}</span>
          <span className="text-right">
            <Unit v={v.slice(0, -1)} u="万" c={k === "m" ? M : "text-[#c4c400]"} />
          </span>
          <span className={`pl-[18px] ${side === "B" ? "text-[#ff3232]" : "text-[#00d000]"}`}>{side}</span>
          <span className="text-right text-[#a8a8a8]">{n}</span>
        </div>
      ))}
    </div>
  </div>
);

const SideStrip = () => (
  <div className="flex w-[37px] shrink-0 flex-col items-center bg-[#f0f0f0]">
    {sideIcons.map((ic, i) =>
      ic === "sep" ? (
        <div key={i} className="flex h-[12px] w-full items-center px-[5px]"><div className="h-[2px] w-full bg-[#c8c8c8]" /></div>
      ) : (
        <div key={i} className="flex h-[34.6px] items-center justify-center">{ic}</div>
      )
    )}
    {sideNums.map((n) => (
      <div key={n} className={`flex h-[34.6px] w-full items-center justify-center text-[16px] text-[#2a5090] ${n === "日" ? "border border-[#b8b8b8] bg-[#e4e4e4]" : ""}`}>{n}</div>
    ))}
  </div>
);

const StatusBar = () => {
  const Num = ({ w, children }: { w: string; children: React.ReactNode }) => (
    <span className={`whitespace-nowrap text-[21px] font-bold text-[#ff0000] ${w}`}>{children}</span>
  );
  const Big = ({ w, v, u = "亿" }: { w: string; v: string; u?: string }) => (
    <span className={`whitespace-nowrap ${w}`}>
      <b className="text-[21px] text-[#101010]">{v}</b>
      <span className="text-[24px] text-[#404040]">{u}</span>
    </span>
  );
  const Label = ({ w, t }: { w: string; t: string }) => <span className={`text-[24px] text-[#404040] ${w}`}>{t}</span>;
  return (
    <div className="flex h-[36px] items-center border-t-2 border-[#d0d0d0] bg-[#f0f0f0] leading-none">
      <svg width="25" height="24" viewBox="0 0 25 24" className="shrink-0">
        <rect x="2" y="2" width="18" height="20" rx="3" fill="#f0b840" stroke="#c08820" />
        <rect x="5" y="8" width="12" height="6" fill="#fff0b0" />
      </svg>
      <Label w="w-[54px]" t="上证" />
      <Num w="w-[102px]">3489.15</Num>
      <Num w="w-[75px]">32.00</Num>
      <Num w="w-[86px]">0.93%</Num>
      <Big w="w-[95px]" v="4156" />
      <Label w="w-[53px]" t="深证" />
      <Num w="w-[96px]">13550.0</Num>
      <Num w="w-[82px]">252.88</Num>
      <Num w="w-[84px]">1.90%</Num>
      <Big w="w-[99px]" v="6253" />
      <Label w="w-[52px]" t="中小" />
      <Num w="w-[96px]">9315.03</Num>
      <Num w="w-[80px]">189.34</Num>
      <Num w="w-[85px]">2.07%</Num>
      <Big w="w-[98px]" v="812.5" />
      <span className="flex h-full items-center border-l-2 border-[#c0c0c0] pl-[5px] text-[24px] text-[#404040]">总成交</span>
      <b className="ml-[11px] text-[21px] text-[#101010]">10485亿</b>
    </div>
  );
};

export default function App() {
  return (
    <div className="relative h-[1395px] w-[2160px] overflow-hidden bg-black font-['Liberation_Sans','Noto_Sans_CJK_SC',sans-serif]">
      <header className="flex h-[35px] items-center border-y-2 border-b-[#a0a0a0] border-t-[#d8d8d8] bg-[#f0f0f0] text-[#404040]">
        <svg width="36" height="30" viewBox="0 0 36 30" className="shrink-0">
          <rect x="4" y="2" width="26" height="26" rx="2" fill="#d8232a" />
          <path d="M8 23C9 14 17 8 28 4C24 9 20 12 19 15L25 14C20 18 13 19 8 23Z" fill="#fff" />
        </svg>
        <span className="w-[172px] text-[18px]">通达信金融终端</span>
        <nav className="flex text-[18px]">
          {topMenu.map((m) => (
            <span key={m} className="relative w-[72px]">
              {m}
              {m === "发现" && <i className="absolute left-[43px] top-[3px] h-[6px] w-[4px] bg-[#ff0000]" />}
            </span>
          ))}
        </nav>
        <span className="ml-[234px] w-[120px] text-[19px] text-[#ff2020]">交易未登录</span>
        <span className="w-[314px] text-[19px] text-[#ff2020]">西藏珠峰</span>
        <nav className="flex w-[283px] text-[18px]">
          {["功能", "版面", "公式", "选项", "帮助"].map((m) => (
            <span key={m} className="w-[57px]">{m}</span>
          ))}
        </nav>
        <span className="flex h-full w-[124px] items-center justify-between border-x-2 border-[#c8c8c8] px-[3px] font-['Liberation_Mono',monospace] text-[15px]">
          19:43:28<span className="pr-[1px] font-['Noto_Sans_CJK_SC',sans-serif] text-[18px]">周三</span>
        </span>
        <svg width="157" height="30" viewBox="0 0 157 30" className="shrink-0" fill="none" stroke="#303030" strokeWidth="3">
          <path d="M26 8L19 15L26 22" />
          <path d="M55 16H68" />
          <rect x="94" y="11" width="11" height="11" />
          <path d="M98 10V7H109V18H106" />
          <path d="M131 8L146 22M146 8L131 22" />
        </svg>
      </header>

      <div className="flex h-[1324px]">
        <main className="w-[1787px] shrink-0">
          <div className="flex h-[32px] items-center border-b-2 border-[#b00000] text-[18px] text-[#c0c0c0]">
            <span className="flex h-full w-[36px] items-center justify-center border-x border-[#a00000]">
              <svg width="18" height="20" viewBox="0 0 18 20"><rect x="1" y="1" width="16" height="18" rx="2" fill="#282828" stroke="#808080" /><rect x="9" y="4" width="5" height="12" fill="#b0b0b0" /></svg>
            </span>
            <span className="w-[7px]" />
            {periodTabs.map(([t, c]) => <span key={t} className={`whitespace-nowrap pt-[2px] ${c}`}>{t}</span>)}
            <span className="ml-[680.5px] flex h-full">
              {toolTabs.map(([t, c]) => <span key={t} className={`flex items-center justify-center border-l border-[#a00000] pt-[2px] ${c}`}>{t}</span>)}
            </span>
          </div>
          <PricePane />
          <VarPane />
          <AdPane />
          <DateAxis />
          <TabRow tabs={bottomTabs1} height="h-[25px]" extra={<span className="ml-[818px] w-[45px] border-l-2 border-[#900000] pl-[4px] leading-[24px]">模板</span>} />
          <TabRow tabs={bottomTabs2} height="h-[27px]" />
        </main>
        <SidePanel />
        <SideStrip />
      </div>

      <StatusBar />

      <div className="absolute left-[1360px] top-[1314px] flex h-[81px] w-[800px] items-center bg-[#7ba8d8]/95">
        <span className="ml-[16px] w-[300px] text-[56px] font-bold leading-none text-[#14088c]">公式指标网</span>
        <svg width="90" height="80" viewBox="0 0 90 80" className="-ml-[1px] shrink-0">
          <path d="M12 40A33 33 0 0 1 42 5" fill="none" stroke="#d86048" strokeWidth="7" />
          <path d="M48 5A33 33 0 0 1 78 34" fill="none" stroke="#d86048" strokeWidth="7" />
          <path d="M78 44A34 34 0 0 1 48 76" fill="none" stroke="#e8c840" strokeWidth="7" />
          <path d="M12 46A33 33 0 0 0 32 73" fill="none" stroke="#d8e0f0" strokeWidth="2" strokeDasharray="2 2" />
          <path d="M40 4H50V20H63V38H54V58H60V72H30V58H36V38H27V20H40Z" fill="#e8c840" />
          <path d="M42 10H48M32 30H58M32 48H58" stroke="#7ba8d8" strokeWidth="3" />
        </svg>
        <span className="ml-[23px] font-['Liberation_Serif',serif] text-[65px] font-bold leading-none text-white">www.9m8.cn</span>
      </div>
    </div>
  );
}
